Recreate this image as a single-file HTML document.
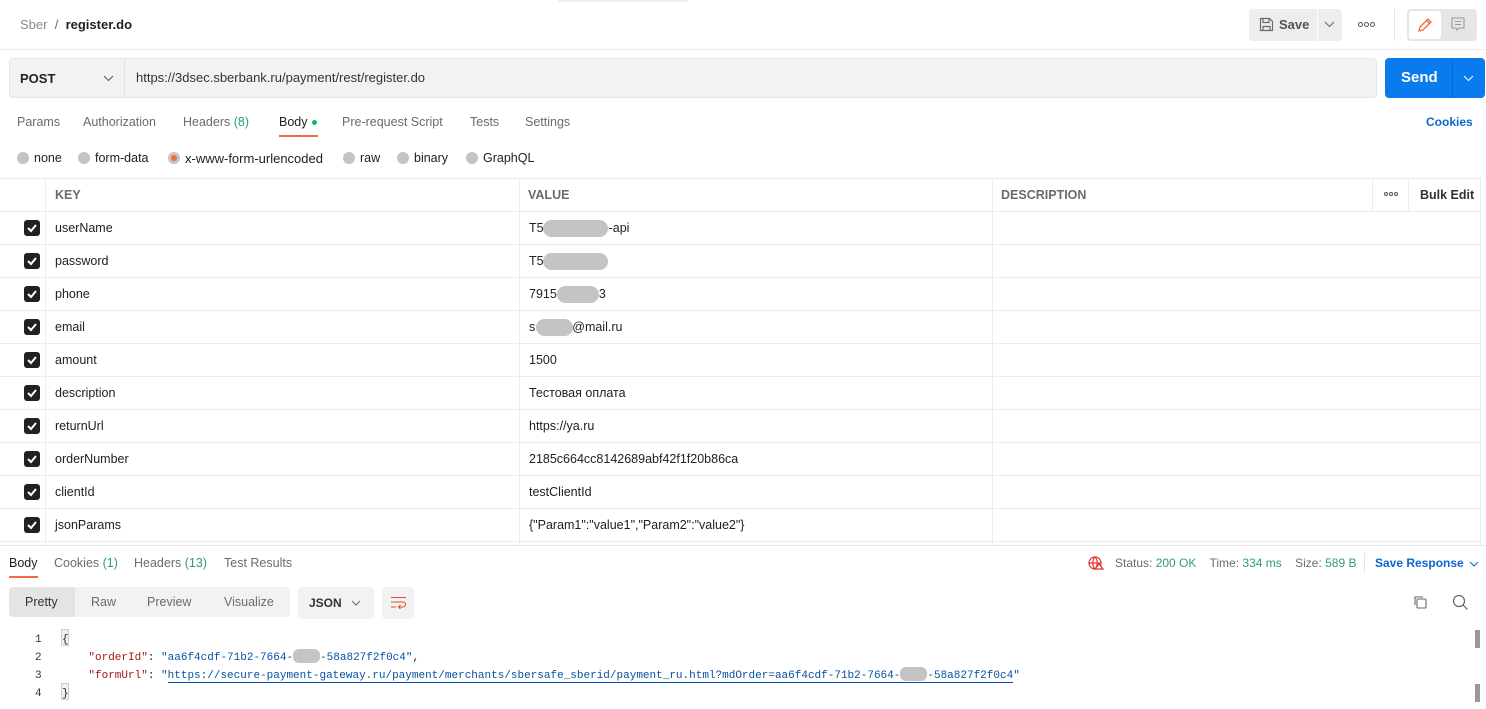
<!DOCTYPE html>
<html><head><meta charset="utf-8"><style>
*{box-sizing:border-box;margin:0;padding:0}
body{width:1486px;height:709px;overflow:hidden;background:#fff;font-family:"Liberation Sans",Arial,sans-serif;font-size:12.5px;color:#212121;position:relative}
.a{position:absolute;white-space:nowrap}
.g{color:#6b6b6b}
.blob{position:absolute;background:#c4c4c4;border-radius:9px;height:17px}
.ib{display:inline-block;background:#c4c4c4;border-radius:6px;height:14px;vertical-align:-3px}
.hl{position:absolute;left:0;width:1480px;height:1px;background:#ececec}
.vl{position:absolute;width:1px;background:#ececec}
.cb{position:absolute;left:24px;width:16px;height:16px;background:#212121;border-radius:3px}
.cb svg{position:absolute;left:2px;top:2px}
.rad{position:absolute;width:12px;height:12px;border-radius:50%;background:#c4c4c4;top:152px}
.mono{font-family:"Liberation Mono",monospace;font-size:11px}
.dots{position:absolute;display:flex;gap:1px}
.dots i{display:block;width:5px;height:5px;border:1px solid #555;border-radius:50%}
</style></head><body>
<div class="a" style="left:20px;top:17px;font-size:13px"><span style="color:#8a8a8a">Sber</span> &nbsp;<span style="color:#6b6b6b">/</span>&nbsp; <b style="color:#212121">register.do</b></div>
<div class="a" style="left:558px;top:0;width:130px;height:2px;background:#f0f0f0"></div>
<div class="a" style="left:1249px;top:9px;width:68px;height:32px;background:#ededed;border-radius:4px 0 0 4px"></div>
<svg class="a" style="left:1259px;top:17px" width="15" height="15" viewBox="0 0 15 15" fill="none" stroke="#6b6b6b" stroke-width="1.2"><path d="M1.5 1.5h9l3 3v9h-12z M4 1.5v4h6v-4 M4 13.5v-4h7v4"/></svg>
<div class="a" style="left:1279px;top:17px;font-size:13px;color:#555;font-weight:bold">Save</div>
<div class="a" style="left:1318px;top:9px;width:24px;height:32px;background:#ededed;border-radius:0 4px 4px 0"></div>
<svg class="a" style="left:1324px;top:21px" width="11" height="7"><path d="M1 1l4.5 4.5L10 1" stroke="#666" fill="none"/></svg>
<div class="dots" style="left:1358px;top:22px"><i></i><i></i><i></i></div>
<div class="a" style="left:1394px;top:9px;width:1px;height:32px;background:#e6e6e6"></div>
<div class="a" style="left:1407px;top:9px;width:70px;height:32px;background:#e6e6e6;border-radius:4px"></div>
<div class="a" style="left:1409px;top:11px;width:32px;height:28px;background:#fff;border-radius:3px"></div>
<svg class="a" style="left:1417px;top:17px" width="16" height="16" viewBox="0 0 16 16" fill="none" stroke="#f26b3a" stroke-width="1.3"><path d="M2 14l1-4 8-8 3 3-8 8z M9.5 3.5l3 3"/></svg>
<svg class="a" style="left:1451px;top:17px" width="14" height="15" viewBox="0 0 14 15" fill="none" stroke="#999" stroke-width="1.1"><path d="M1 1h12v10H8l-2 2-1-2H1z M4 4.5h6 M4 7.5h6"/></svg>
<div class="hl" style="top:49px;width:1486px"></div>
<div class="a" style="left:9px;top:58px;width:1368px;height:40px;background:#f2f2f2;border:1px solid #e6e6e6;border-radius:4px"></div>
<div class="a" style="left:124px;top:58px;width:1px;height:40px;background:#e0e0e0"></div>
<div class="a" style="left:20px;top:71px;font-weight:bold;font-size:13px">POST</div>
<svg class="a" style="left:103px;top:75px" width="11" height="7"><path d="M1 1l4.5 4.5L10 1" stroke="#555" fill="none"/></svg>
<div class="a" style="left:136px;top:70px;font-size:13px;color:#333">https://3dsec.sberbank.ru/payment/rest/register.do</div>
<div class="a" style="left:1385px;top:58px;width:100px;height:40px;background:#097bed;border-radius:4px"></div>
<div class="a" style="left:1452px;top:58px;width:1px;height:40px;background:#0a68c8"></div>
<div class="a" style="left:1401px;top:69px;font-size:15px;font-weight:bold;color:#fff">Send</div>
<svg class="a" style="left:1463px;top:75px" width="11" height="7"><path d="M1 1l4.5 4.5L10 1" stroke="#fff" fill="none"/></svg>
<div class="a g" style="left:17px;top:115px">Params</div>
<div class="a g" style="left:83px;top:115px">Authorization</div>
<div class="a g" style="left:183px;top:115px">Headers <span style="color:#2f9e6f">(8)</span></div>
<div class="a" style="left:279px;top:115px">Body</div>
<div class="a" style="left:312px;top:120px;width:5px;height:5px;border-radius:50%;background:#0cbb52"></div>
<div class="a" style="left:279px;top:135px;width:39px;height:2px;background:#f26b3a"></div>
<div class="a g" style="left:342px;top:115px">Pre-request Script</div>
<div class="a g" style="left:470px;top:115px">Tests</div>
<div class="a g" style="left:525px;top:115px">Settings</div>
<div class="a" style="left:1426px;top:115px;color:#0b66d0;font-weight:bold;font-size:12px">Cookies</div>
<div class="rad" style="left:17px"></div><div class="a" style="left:34px;top:151px">none</div>
<div class="rad" style="left:78px"></div><div class="a" style="left:95px;top:151px">form-data</div>
<div class="rad" style="left:168px"></div><div class="a" style="left:171px;top:155px;width:6px;height:6px;border-radius:50%;background:#f26b3a"></div><div class="a" style="left:185px;top:151px;font-size:13px">x-www-form-urlencoded</div>
<div class="rad" style="left:343px"></div><div class="a" style="left:360px;top:151px">raw</div>
<div class="rad" style="left:397px"></div><div class="a" style="left:414px;top:151px">binary</div>
<div class="rad" style="left:466px"></div><div class="a" style="left:483px;top:151px">GraphQL</div>
<div class="hl" style="top:178px"></div>
<div class="hl" style="top:211px"></div>
<div class="vl" style="left:45px;top:178px;height:367px"></div>
<div class="vl" style="left:519px;top:178px;height:367px"></div>
<div class="vl" style="left:992px;top:178px;height:367px"></div>
<div class="vl" style="left:1372px;top:178px;height:33px"></div>
<div class="vl" style="left:1408px;top:178px;height:33px"></div>
<div class="vl" style="left:1480px;top:178px;height:367px"></div>
<div class="a" style="left:55px;top:188px;font-weight:bold;color:#6b6b6b">KEY</div>
<div class="a" style="left:528px;top:188px;font-weight:bold;color:#6b6b6b">VALUE</div>
<div class="a" style="left:1001px;top:188px;font-weight:bold;color:#6b6b6b">DESCRIPTION</div>
<div class="dots" style="left:1384px;top:192px"><i style="width:4px;height:4px"></i><i style="width:4px;height:4px"></i><i style="width:4px;height:4px"></i></div>
<div class="a" style="left:1420px;top:188px;font-weight:bold;color:#333">Bulk Edit</div>
<div class="hl" style="top:244px"></div><div class="hl" style="top:277px"></div><div class="hl" style="top:310px"></div><div class="hl" style="top:343px"></div><div class="hl" style="top:376px"></div><div class="hl" style="top:409px"></div><div class="hl" style="top:442px"></div><div class="hl" style="top:475px"></div><div class="hl" style="top:508px"></div><div class="hl" style="top:541px"></div>
<div class="cb" style="top:220px"><svg width="12" height="12"><path d="M2 6l3 3 5-6" stroke="#fff" stroke-width="2" fill="none"/></svg></div>
<div class="cb" style="top:253px"><svg width="12" height="12"><path d="M2 6l3 3 5-6" stroke="#fff" stroke-width="2" fill="none"/></svg></div>
<div class="cb" style="top:286px"><svg width="12" height="12"><path d="M2 6l3 3 5-6" stroke="#fff" stroke-width="2" fill="none"/></svg></div>
<div class="cb" style="top:319px"><svg width="12" height="12"><path d="M2 6l3 3 5-6" stroke="#fff" stroke-width="2" fill="none"/></svg></div>
<div class="cb" style="top:352px"><svg width="12" height="12"><path d="M2 6l3 3 5-6" stroke="#fff" stroke-width="2" fill="none"/></svg></div>
<div class="cb" style="top:385px"><svg width="12" height="12"><path d="M2 6l3 3 5-6" stroke="#fff" stroke-width="2" fill="none"/></svg></div>
<div class="cb" style="top:418px"><svg width="12" height="12"><path d="M2 6l3 3 5-6" stroke="#fff" stroke-width="2" fill="none"/></svg></div>
<div class="cb" style="top:451px"><svg width="12" height="12"><path d="M2 6l3 3 5-6" stroke="#fff" stroke-width="2" fill="none"/></svg></div>
<div class="cb" style="top:484px"><svg width="12" height="12"><path d="M2 6l3 3 5-6" stroke="#fff" stroke-width="2" fill="none"/></svg></div>
<div class="cb" style="top:517px"><svg width="12" height="12"><path d="M2 6l3 3 5-6" stroke="#fff" stroke-width="2" fill="none"/></svg></div>
<div class="a" style="left:55px;top:221px">userName</div>
<div class="a" style="left:55px;top:254px">password</div>
<div class="a" style="left:55px;top:287px">phone</div>
<div class="a" style="left:55px;top:320px">email</div>
<div class="a" style="left:55px;top:353px">amount</div>
<div class="a" style="left:55px;top:386px">description</div>
<div class="a" style="left:55px;top:419px">returnUrl</div>
<div class="a" style="left:55px;top:452px">orderNumber</div>
<div class="a" style="left:55px;top:485px">clientId</div>
<div class="a" style="left:55px;top:518px">jsonParams</div>
<div class="a" style="left:529px;top:221px">T5<span style="display:inline-block;width:65px"></span>-api</div><div class="blob" style="left:543px;top:220px;width:65px"></div>
<div class="a" style="left:529px;top:254px">T5</div><div class="blob" style="left:543px;top:253px;width:65px"></div>
<div class="a" style="left:529px;top:287px">7915<span style="display:inline-block;width:42px"></span>3</div><div class="blob" style="left:557px;top:286px;width:42px"></div>
<div class="a" style="left:529px;top:320px">s<span style="display:inline-block;width:37px"></span>@mail.ru</div><div class="blob" style="left:536px;top:319px;width:37px"></div>
<div class="a" style="left:529px;top:353px">1500</div>
<div class="a" style="left:529px;top:386px">Тестовая оплата</div>
<div class="a" style="left:529px;top:419px">https://ya.ru</div>
<div class="a" style="left:529px;top:452px">2185c664cc8142689abf42f1f20b86ca</div>
<div class="a" style="left:529px;top:485px">testClientId</div>
<div class="a" style="left:529px;top:518px">{"Param1":"value1","Param2":"value2"}</div>
<div class="a" style="left:0;top:545px;width:1486px;height:1px;background:#e6e6e6"></div>
<div class="a" style="left:9px;top:556px">Body</div>
<div class="a" style="left:9px;top:576px;width:29px;height:2px;background:#f26b3a"></div>
<div class="a g" style="left:54px;top:556px">Cookies <span style="color:#2f9e6f">(1)</span></div>
<div class="a g" style="left:134px;top:556px">Headers <span style="color:#2f9e6f">(13)</span></div>
<div class="a g" style="left:224px;top:556px">Test Results</div>
<svg class="a" style="left:1088px;top:556px" width="16" height="14" viewBox="0 0 16 14" fill="none" stroke="#e0312b" stroke-width="1.2"><circle cx="7" cy="7" r="6"/><path d="M1 7h12 M7 1c-3 3-3 9 0 12 M7 1c3 3 3 9 0 12"/><path d="M11 8l4 5h-8z" fill="#fff"/></svg>
<div class="a" style="left:1115px;top:556px;font-size:12px;color:#6b6b6b">Status: <span style="color:#2f9e6f">200 OK</span> &nbsp;&nbsp; Time: <span style="color:#2f9e6f">334 ms</span> &nbsp;&nbsp; Size: <span style="color:#2f9e6f">589 B</span></div>
<div class="a" style="left:1364px;top:553px;width:1px;height:20px;background:#e6e6e6"></div>
<div class="a" style="left:1375px;top:556px;font-weight:bold;color:#0b66d0;font-size:12px">Save Response</div>
<svg class="a" style="left:1469px;top:561px" width="10" height="6"><path d="M1 1l4 4 4-4" stroke="#0b66d0" fill="none"/></svg>
<div class="a" style="left:9px;top:587px;width:281px;height:30px;background:#f2f2f2;border-radius:4px"></div>
<div class="a" style="left:9px;top:587px;width:66px;height:30px;background:#e4e4e4;border-radius:4px 0 0 4px"></div>
<div class="a" style="left:25px;top:595px;color:#333">Pretty</div>
<div class="a g" style="left:91px;top:595px">Raw</div>
<div class="a g" style="left:147px;top:595px">Preview</div>
<div class="a g" style="left:224px;top:595px">Visualize</div>
<div class="a" style="left:298px;top:587px;width:76px;height:32px;background:#f2f2f2;border-radius:4px"></div>
<div class="a" style="left:309px;top:596px;font-weight:bold;color:#333;font-size:12px">JSON</div>
<svg class="a" style="left:351px;top:600px" width="10" height="6"><path d="M1 1l4 4 4-4" stroke="#666" fill="none"/></svg>
<div class="a" style="left:382px;top:587px;width:32px;height:32px;background:#f2f2f2;border-radius:4px"></div>
<svg class="a" style="left:390px;top:596px" width="17" height="13" viewBox="0 0 17 13" fill="none" stroke="#e0502b" stroke-width="1.1"><path d="M1 1.5h15 M1 6h12a2.5 2.5 0 0 1 0 5h-4 M10.5 9l-2 2 2 2 M1 11h5"/></svg>
<svg class="a" style="left:1413px;top:595px" width="15" height="15" viewBox="0 0 15 15" fill="none" stroke="#666" stroke-width="1.1"><rect x="4" y="4" width="9" height="9" rx="1"/><path d="M2 10V2h8"/></svg>
<svg class="a" style="left:1452px;top:594px" width="17" height="17" viewBox="0 0 17 17" fill="none" stroke="#666" stroke-width="1.2"><circle cx="7" cy="7" r="5.5"/><path d="M11 11l4.5 4.5"/></svg>
<div class="a mono" style="left:35px;top:631px;color:#333;line-height:18px">1<br>2<br>3<br>4</div>
<div class="a" style="left:61px;top:629px;width:8px;height:17px;background:#f0f0f0;border:1px solid #ccc"></div>
<div class="a" style="left:61px;top:683px;width:8px;height:17px;background:#f0f0f0;border:1px solid #ccc"></div>
<div class="a mono" style="left:62px;top:631px;line-height:18px;color:#212121">{<br>&nbsp;&nbsp;&nbsp;&nbsp;<span style="color:#a31515">"orderId"</span>: <span style="color:#0451a5">"aa6f4cdf-71b2-7664-<span class="ib" style="width:27px"></span>-58a827f2f0c4"</span>,<br>&nbsp;&nbsp;&nbsp;&nbsp;<span style="color:#a31515">"formUrl"</span>: <span style="color:#0451a5">"<span style="border-bottom:1px solid #0451a5">https://secure-payment-gateway.ru/payment/merchants/sbersafe_sberid/payment_ru.html?mdOrder=aa6f4cdf-71b2-7664-<span class="ib" style="width:27px"></span>-58a827f2f0c4</span>"</span><br>}</div>
<div class="a" style="left:1475px;top:630px;width:5px;height:18px;background:#999"></div>
<div class="a" style="left:1475px;top:684px;width:5px;height:18px;background:#999"></div>
</body></html>
